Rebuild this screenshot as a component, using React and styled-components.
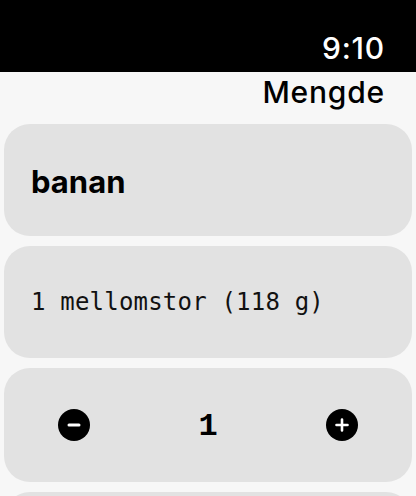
import React from 'react';
import styled, { createGlobalStyle } from 'styled-components';

const GlobalStyle = createGlobalStyle`
  html, body {
    margin: 0;
    padding: 0;
    background: #f7f7f7;
    overflow: hidden;
  }
`;

const Screen = styled.div`
  width: 416px;
  height: 496px;
  display: flex;
  flex-direction: column;
  background: #f7f7f7;
  overflow: hidden;
  & > * {
    flex-shrink: 0;
  }
`;

const StatusBar = styled.div`
  height: 72px;
  background: #000;
  display: flex;
  align-items: flex-end;
  justify-content: flex-end;
  padding: 0 31px 6px 0;
  box-sizing: border-box;
  color: #fff;
  font-family: Inter, 'Liberation Sans', sans-serif;
  font-size: 30px;
  font-weight: 500;
  letter-spacing: 0.8px;
`;

const Title = styled.h1`
  margin: 0;
  height: 52px;
  padding: 2px 31px 0 0;
  box-sizing: border-box;
  text-align: right;
  font-family: Inter, 'Liberation Sans', sans-serif;
  font-size: 30px;
  font-weight: 500;
  letter-spacing: 0.8px;
  color: #000;
  line-height: 36px;
`;

const List = styled.div`
  display: flex;
  flex-direction: column;
  gap: 10px;
  padding: 0 4px;
`;

const Card = styled.div`
  flex-shrink: 0;
  height: ${p => p.$h || 112}px;
  border-radius: 26px;
  background: #e2e2e2;
  display: flex;
  align-items: center;
  justify-content: ${p => (p.$spread ? 'space-between' : 'flex-start')};
  padding: 0 ${p => (p.$spread ? 54 : 27)}px;
  box-sizing: border-box;
`;

const Name = styled.span`
  font-family: Inter, 'Liberation Sans', sans-serif;
  font-size: 31px;
  font-weight: 700;
  color: #000;
  margin-top: 2px;
`;

const Portion = styled.span`
  font-family: 'DejaVu Sans Mono', 'Liberation Mono', monospace;
  font-size: 24px;
  letter-spacing: 0.2px;
  color: #111;
`;

const Count = styled.span`
  font-family: 'Liberation Mono', monospace;
  font-size: 32px;
  font-weight: 700;
  color: #000;
  margin-top: 2px;
`;

const RoundButton = styled.button`
  width: 32px;
  height: 32px;
  padding: 0;
  border: none;
  border-radius: 50%;
  background: #000;
  display: flex;
  align-items: center;
  justify-content: center;
  cursor: pointer;
`;

const Minus = () => (
  <svg width="14" height="14" viewBox="0 0 14 14">
    <path d="M2 7h10" stroke="#fff" strokeWidth="3" strokeLinecap="round" />
  </svg>
);

const Plus = () => (
  <svg width="16" height="16" viewBox="0 0 16 16">
    <path d="M2.5 8h11M8 2.5v11" stroke="#fff" strokeWidth="2.6" strokeLinecap="round" />
  </svg>
);

export default function App() {
  return (
    <>
      <GlobalStyle />
      <Screen>
        <StatusBar>9:10</StatusBar>
        <Title>Mengde</Title>
        <List>
          <Card>
            <Name>banan</Name>
          </Card>
          <Card>
            <Portion>1 mellomstor (118 g)</Portion>
          </Card>
          <Card $spread $h={114}>
            <RoundButton aria-label="minus"><Minus /></RoundButton>
            <Count>1</Count>
            <RoundButton aria-label="pluss"><Plus /></RoundButton>
          </Card>
          <Card />
        </List>
      </Screen>
    </>
  );
}
